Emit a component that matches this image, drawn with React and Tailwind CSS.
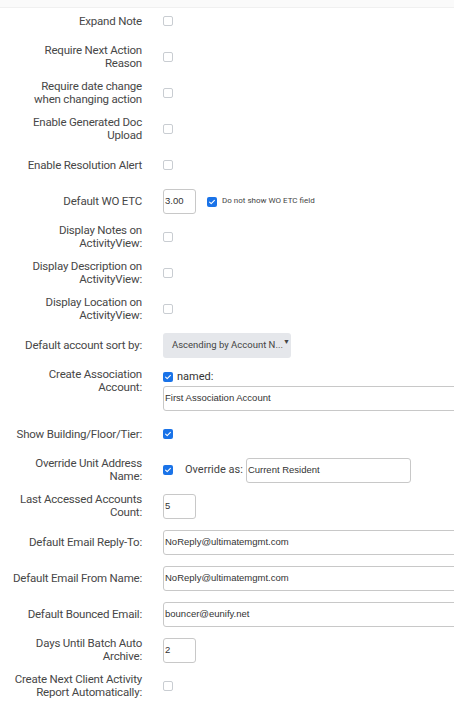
import React from "react";

function Check({ checked }) {
  if (checked) {
    return (
      <span className="inline-flex h-[10px] w-[10px] shrink-0 items-center justify-center rounded-[2px] bg-[#1a73e8]">
        <svg width="8" height="8" viewBox="0 0 8 8" fill="none">
          <path d="M1.6 4.2 L3.2 5.7 L6.4 2.4" stroke="white" strokeWidth="1.1" strokeLinecap="round" strokeLinejoin="round" />
        </svg>
      </span>
    );
  }
  return <span className="inline-block h-[10px] w-[10px] shrink-0 rounded-[2px] border border-[#c9cdd2] bg-white" />;
}

function Input({ value, className = "" }) {
  return (
    <div className={"flex h-[25px] items-center whitespace-nowrap rounded-[3px] border border-[#c8c8c8] bg-white pl-[1px] text-[9.5px] text-[#333] " + className} style={{ fontFamily: '"Liberation Sans", Arial, sans-serif' }}>
      {value}
    </div>
  );
}

function Row({ label, children, top }) {
  return (
    <div className={"flex min-h-[26px] gap-[21px] " + (top ? "items-start" : "items-center")}>
      <div className="w-[142px] shrink-0 whitespace-nowrap text-right text-[11.5px] leading-[13px] tracking-[-0.2px] text-[#474747]">
        {label}
      </div>
      <div className="flex min-w-0 flex-1 items-center">{children}</div>
    </div>
  );
}

export default function App() {
  return (
    <div className="w-[454px] overflow-hidden bg-white" style={{ fontFamily: 'Roboto, "Noto Sans", sans-serif' }}>
      <div className="h-[8px] border-b border-[#f0f0f0] bg-[#fafafa]" />
      <div className="flex flex-col gap-[10px] pb-[9px]">
        <Row label="Expand Note"><Check /></Row>
        <Row label={<>Require Next Action<br />Reason</>}><Check /></Row>
        <Row label={<>Require date change<br />when changing action</>}><Check /></Row>
        <Row label={<>Enable Generated Doc<br />Upload</>}><Check /></Row>
        <Row label="Enable Resolution Alert"><Check /></Row>
        <Row label="Default WO ETC">
          <Input value="3.00" className="w-[33px] h-[24px]" />
          <span className="ml-[11px]"><Check checked /></span>
          <span className="ml-[5px] whitespace-nowrap text-[8px] text-[#444]">Do not show WO ETC field</span>
        </Row>
        <Row label={<>Display Notes on<br />ActivityView:</>}><Check /></Row>
        <Row label={<>Display Description on<br />ActivityView:</>}><Check /></Row>
        <Row label={<>Display Location on<br />ActivityView:</>}><Check /></Row>
        <Row label="Default account sort by:">
          <div className="flex h-[25px] w-[128px] items-center whitespace-nowrap rounded-[3px] bg-[#e5e7eb] pl-[9px] text-[9.5px] text-[#444]">
            <span>Ascending by Account N...</span>
            <span className="-mt-[5px] text-[7px]">▼</span>
          </div>
        </Row>
        <Row top label={<>Create Association<br />Account:</>}>
          <div className="flex flex-1 flex-col">
            <div className="flex h-[18px] items-center">
              <Check checked />
              <span className="ml-[4px] text-[11px] text-[#333]">named:</span>
            </div>
            <Input value="First Association Account" className="-mr-[4px]" />
          </div>
        </Row>
        <Row label="Show Building/Floor/Tier:"><Check checked /></Row>
        <Row label={<>Override Unit Address<br />Name:</>}>
          <Check checked />
          <span className="ml-[12px] mr-[3px] text-[11px] text-[#444]">Override as:</span>
          <Input value="Current Resident" className="w-[165px] h-[24px]" />
        </Row>
        <Row label={<>Last Accessed Accounts<br />Count:</>}>
          <Input value="5" className="w-[33px] h-[24px]" />
        </Row>
        <Row label="Default Email Reply-To:">
          <Input value="NoReply@ultimatemgmt.com" className="flex-1 -mr-[4px]" />
        </Row>
        <Row label="Default Email From Name:">
          <Input value="NoReply@ultimatemgmt.com" className="flex-1 -mr-[4px]" />
        </Row>
        <Row label="Default Bounced Email:">
          <Input value="bouncer@eunify.net" className="flex-1 -mr-[4px]" />
        </Row>
        <Row label={<>Days Until Batch Auto<br />Archive:</>}>
          <Input value="2" className="w-[33px] h-[24px]" />
        </Row>
        <Row label={<>Create Next Client Activity<br />Report Automatically:</>}><Check /></Row>
      </div>
    </div>
  );
}
